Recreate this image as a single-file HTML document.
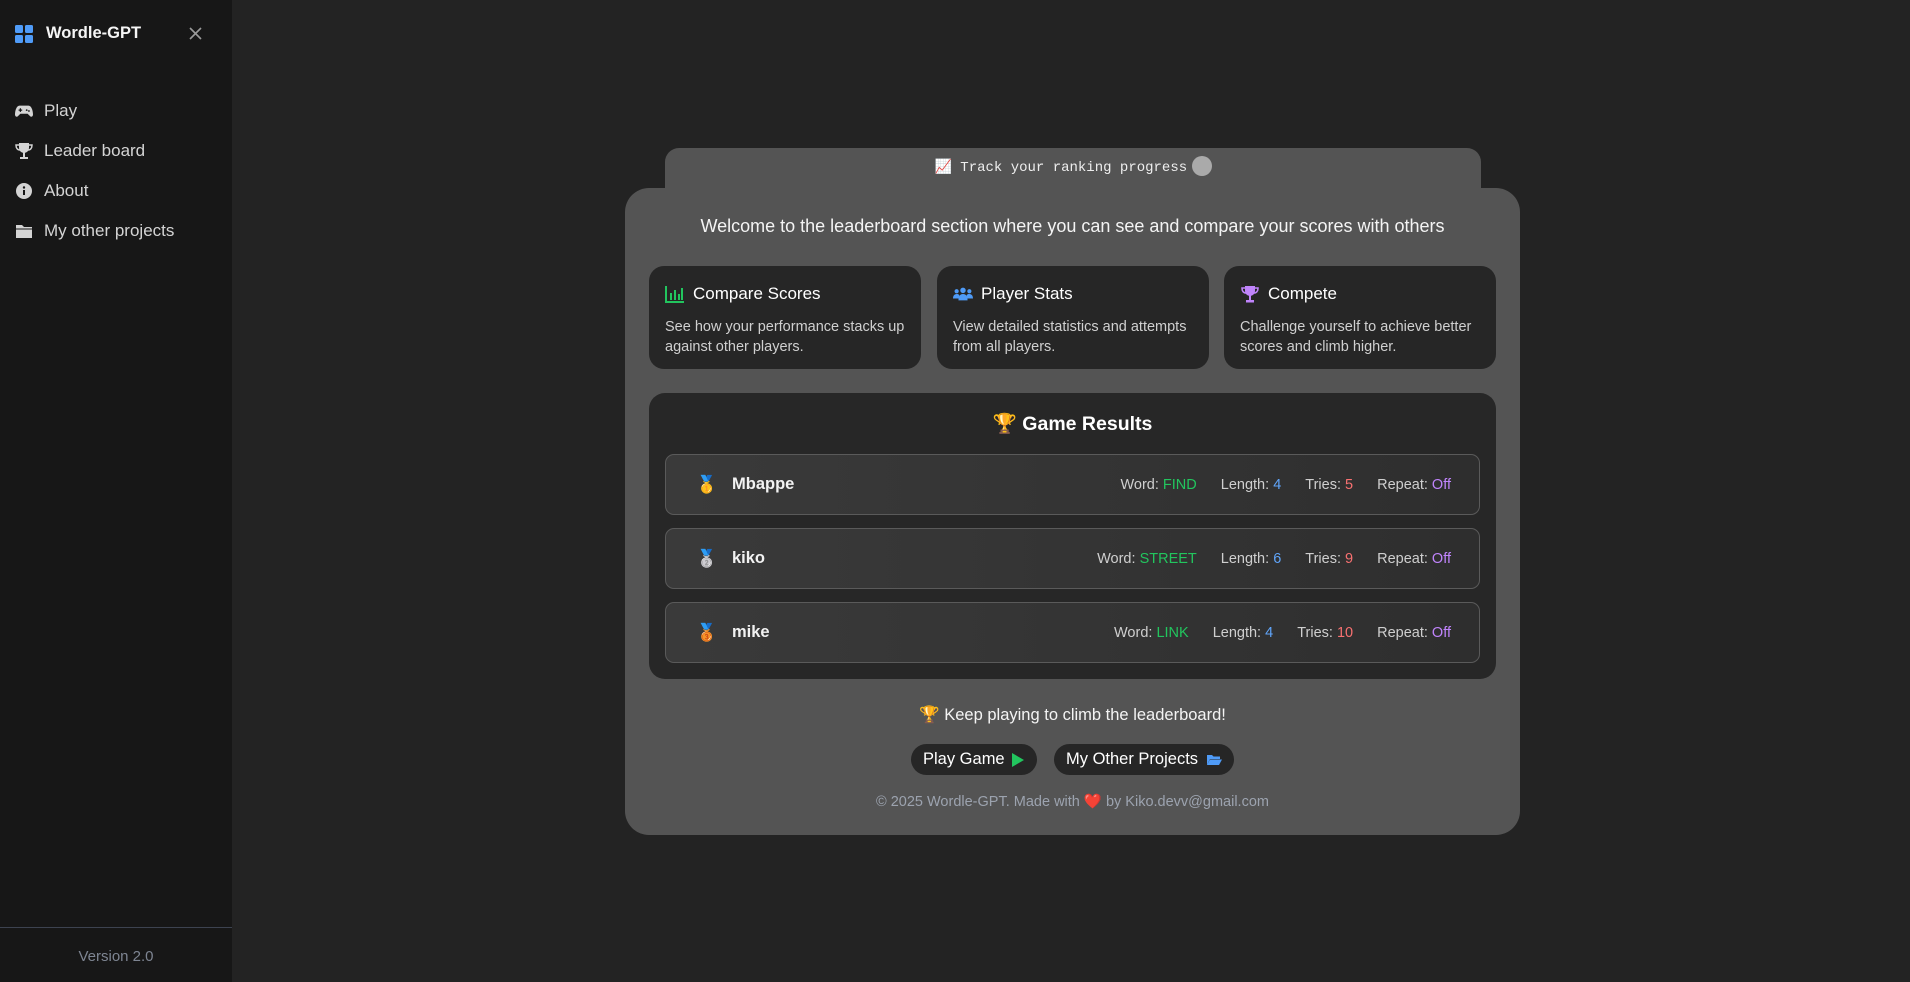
<!DOCTYPE html>
<html><head><meta charset="utf-8">
<style>
*{box-sizing:border-box;margin:0;padding:0}
body{width:1910px;height:982px;background:#232323;font-family:"Liberation Sans","DejaVu Sans",sans-serif;color:#fff;position:relative;overflow:hidden}
.sb{position:absolute;left:0;top:0;width:232px;height:982px;background:#171717}
.abs{position:absolute}
.nav{position:absolute;left:15px;display:flex;align-items:center;font-size:17px;color:#d4d4d4}
.nav svg{width:18px;height:18px;margin-right:11px}
.card{position:absolute;background:#545454;border-radius:24px}
.fc{position:absolute;top:266px;width:272px;height:103px;background:#262626;border-radius:15px;padding:17px 16px}
.fc h3{font-size:17px;font-weight:normal;display:flex;align-items:center;height:22px}
.fc h3 svg{width:20px;height:18px;margin-right:8px}
.fc p{font-size:14.5px;color:#d0d0d0;line-height:20px;margin-top:12px}
.row{position:absolute;left:665px;width:815px;height:61px;border:1px solid #5a5a5a;border-radius:9px;background:linear-gradient(90deg,#3a3a3a,#2e2e2e);display:flex;align-items:center;padding-left:30px}
.row .m{font-size:17px;width:36px}
.row .n{font-size:16.5px;font-weight:bold;color:#f2f2f2}
.row .st{margin-left:auto;margin-right:28px;font-size:14.5px;color:#cfcfcf;display:flex;gap:24px}
.g{color:#22c55e}.b{color:#60a5fa}.r{color:#f87171}.p{color:#c084fc}
.btn{position:absolute;top:744px;height:31px;background:#262626;border-radius:16px;display:flex;align-items:center;font-size:16.5px;padding:0 12px;white-space:nowrap}
</style></head><body>
<div class="sb">
  <svg class="abs" style="left:15px;top:25px" width="18" height="18" viewBox="0 0 18 18"><rect x="0" y="0" width="8" height="8" rx="1.5" fill="#4f9bf7"/><rect x="10" y="0" width="8" height="8" rx="1.5" fill="#4f9bf7"/><rect x="0" y="10" width="8" height="8" rx="1.5" fill="#4f9bf7"/><rect x="10" y="10" width="8" height="8" rx="1.5" fill="#4f9bf7"/></svg>
  <div class="abs" style="left:46px;top:24px;font-size:16.5px;font-weight:bold;color:#f5f5f5">Wordle-GPT</div>
  <svg class="abs" style="left:189px;top:27px" width="13" height="13" viewBox="0 0 13 13"><path d="M1 1L12 12M12 1L1 12" stroke="#9a9a9a" stroke-width="1.6"/></svg>
  <div class="nav" style="top:101px"><svg viewBox="0 0 20 16"><path d="M5 2h10c3 0 5 5 5 10 0 2-2 3-3 2l-3-3H6l-3 3c-1 1-3 0-3-2C0 7 2 2 5 2z" fill="#d4d4d4"/><path d="M4 7h4M6 5v4" stroke="#171717" stroke-width="1.4"/><circle cx="13" cy="7" r="1" fill="#171717"/><circle cx="15.5" cy="8" r="1" fill="#171717"/></svg>Play</div>
  <div class="nav" style="top:141px"><svg viewBox="0 0 18 18"><path d="M4 1h10v5a5 5 0 0 1-10 0z" fill="#d4d4d4"/><path d="M4 3H1c0 3 1.5 5 4 5M14 3h3c0 3-1.5 5-4 5" stroke="#d4d4d4" stroke-width="1.5" fill="none"/><rect x="8" y="10" width="2" height="5" fill="#d4d4d4"/><rect x="5" y="15" width="8" height="2" fill="#d4d4d4"/></svg>Leader board</div>
  <div class="nav" style="top:181px"><svg viewBox="0 0 18 18"><circle cx="9" cy="9" r="8" fill="#d4d4d4"/><rect x="8" y="8" width="2" height="5" fill="#171717"/><circle cx="9" cy="5.5" r="1.2" fill="#171717"/></svg>About</div>
  <div class="nav" style="top:221px"><svg viewBox="0 0 18 16"><path d="M1 2h6l2 2h8v11H1z" fill="#d4d4d4"/><path d="M1 6h16" stroke="#171717" stroke-width="1"/></svg>My other projects</div>
  <div class="abs" style="left:0;top:927px;width:232px;height:1px;background:#3d4350"></div>
  <div class="abs" style="left:0;top:948px;width:232px;text-align:center;font-size:15px;color:#7e8592">Version 2.0</div>
</div>

<div class="abs" style="left:665px;top:148px;width:816px;height:40px;background:#545454;border-radius:14px 14px 0 0;text-align:center;padding-top:8px;font-family:'Liberation Mono',monospace;font-size:14px;color:#eee">📈 Track your ranking progress <span style="display:inline-block;width:20px;height:20px;border-radius:50%;background:#aaa;vertical-align:-5px;margin-left:-4px"></span></div>

<div class="card" style="left:625px;top:188px;width:895px;height:647px"></div>
<div class="abs" style="left:625px;top:216px;width:895px;text-align:center;font-size:18px;color:#f4f4f4">Welcome to the leaderboard section where you can see and compare your scores with others</div>

<div class="fc" style="left:649px"><h3><svg viewBox="0 0 20 18"><path d="M1 1v16h18" stroke="#22c55e" stroke-width="2" fill="none"/><rect x="5" y="8" width="2" height="7" fill="#22c55e"/><rect x="9" y="5" width="2" height="10" fill="#22c55e"/><rect x="13" y="9" width="2" height="6" fill="#22c55e"/><rect x="16" y="3" width="2" height="12" fill="#22c55e"/></svg>Compare Scores</h3><p>See how your performance stacks up against other players.</p></div>
<div class="fc" style="left:937px"><h3><svg viewBox="0 0 22 16"><circle cx="11" cy="4" r="3" fill="#4f9bf7"/><circle cx="4" cy="5" r="2.3" fill="#4f9bf7"/><circle cx="18" cy="5" r="2.3" fill="#4f9bf7"/><path d="M6 15c0-5 2-7 5-7s5 2 5 7z" fill="#4f9bf7"/><path d="M0 13c0-3 1.5-5 4-5s3 1 3 2v3zM22 13c0-3-1.5-5-4-5s-3 1-3 2v3z" fill="#4f9bf7"/></svg>Player Stats</h3><p>View detailed statistics and attempts from all players.</p></div>
<div class="fc" style="left:1224px"><h3><svg viewBox="0 0 18 18"><path d="M4 1h10v5a5 5 0 0 1-10 0z" fill="#c084fc"/><path d="M4 3H1c0 3 1.5 5 4 5M14 3h3c0 3-1.5 5-4 5" stroke="#c084fc" stroke-width="1.6" fill="none"/><rect x="8" y="10" width="2" height="5" fill="#c084fc"/><rect x="5" y="15" width="8" height="2.5" fill="#c084fc"/></svg>Compete</h3><p>Challenge yourself to achieve better scores and climb higher.</p></div>

<div class="abs" style="left:649px;top:393px;width:847px;height:286px;background:#272727;border-radius:16px"></div>
<div class="abs" style="left:649px;top:412px;width:847px;text-align:center;font-size:19.5px;font-weight:bold">🏆 Game Results</div>
<div class="row" style="top:454px"><span class="m">🥇</span><span class="n">Mbappe</span><span class="st"><span>Word: <span class="g">FIND</span></span><span>Length: <span class="b">4</span></span><span>Tries: <span class="r">5</span></span><span>Repeat: <span class="p">Off</span></span></span></div>
<div class="row" style="top:528px"><span class="m">🥈</span><span class="n">kiko</span><span class="st"><span>Word: <span class="g">STREET</span></span><span>Length: <span class="b">6</span></span><span>Tries: <span class="r">9</span></span><span>Repeat: <span class="p">Off</span></span></span></div>
<div class="row" style="top:602px"><span class="m">🥉</span><span class="n">mike</span><span class="st"><span>Word: <span class="g">LINK</span></span><span>Length: <span class="b">4</span></span><span>Tries: <span class="r">10</span></span><span>Repeat: <span class="p">Off</span></span></span></div>

<div class="abs" style="left:625px;top:706px;width:895px;text-align:center;font-size:16.5px;color:#f4f4f4">🏆 Keep playing to climb the leaderboard!</div>
<div class="btn" style="left:911px;width:126px">Play Game<svg style="margin-left:auto" width="14" height="16" viewBox="0 0 14 16"><path d="M1 1l12 7-12 7z" fill="#22c55e"/></svg></div>
<div class="btn" style="left:1054px;width:180px">My Other Projects<svg style="margin-left:auto" width="15" height="12" viewBox="0 0 15 12"><path d="M0 1h5l1.5 1.5H13V5H3L0 11z" fill="#4f9bf7"/><path d="M3 5.5h12L12 11H0z" fill="#4f9bf7"/></svg></div>
<div class="abs" style="left:625px;top:793px;width:895px;text-align:center;font-size:14.5px;color:#9ca3af">© 2025 Wordle-GPT. Made with ❤️ by Kiko.devv@gmail.com</div>
</body></html>
